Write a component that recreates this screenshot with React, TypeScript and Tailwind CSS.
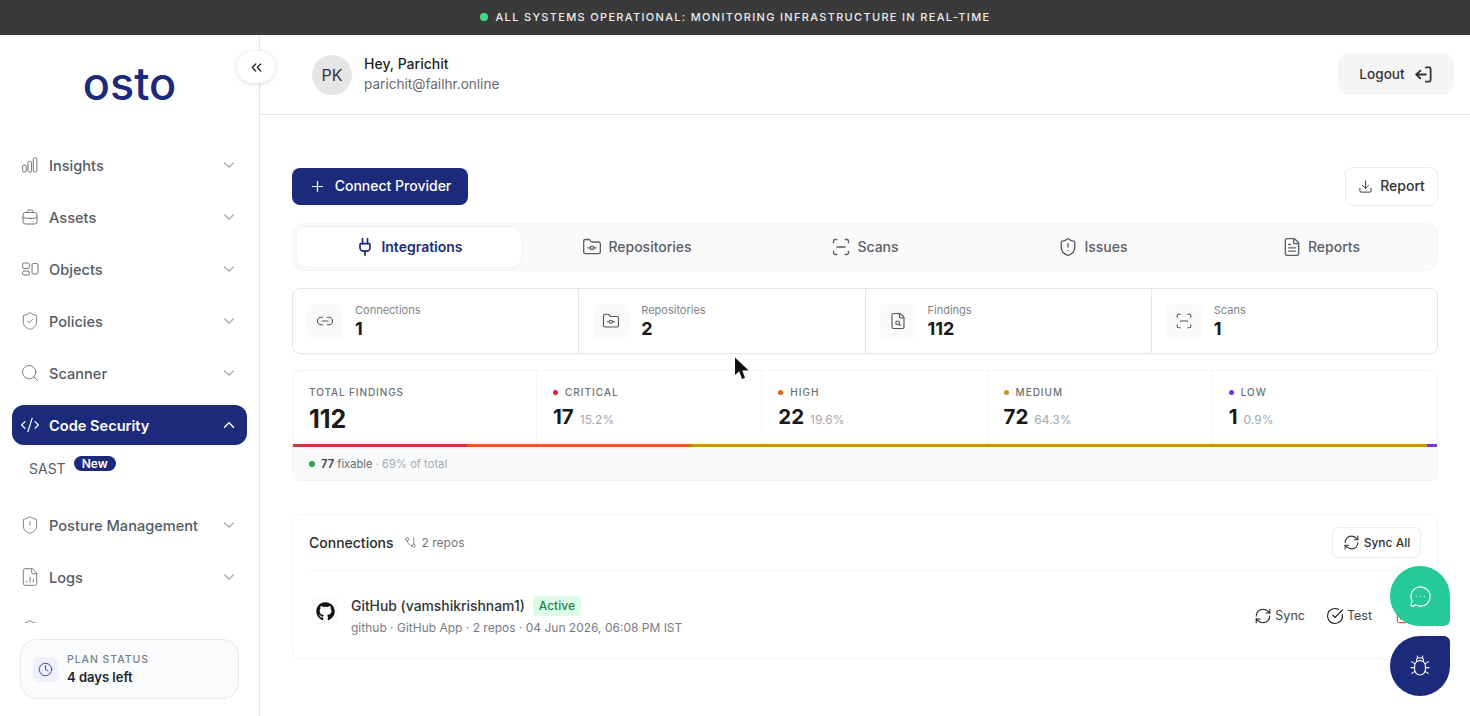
import React from "react";
import {
  ChevronDown, ChevronUp, ChevronsLeft, ShieldCheck, Search, CodeXml, ShieldAlert, FileChartColumn, Clock,
  LogOut, Plus, Download, Plug, FolderGit, ScanLine, FileText, Link2, FileSearch, GitBranch, RefreshCw,
  CircleCheckBig, Trash2, MessageCircleMore,
} from "lucide-react";
import { FaGithub } from "react-icons/fa";

function BarsIcon() {
  return (
    <svg width="16" height="16" viewBox="0 0 16 16" fill="none" stroke="currentColor" strokeWidth="1">
      <rect x="0.7" y="8" width="3.6" height="7" rx="1.2" />
      <rect x="6" y="4.5" width="3.6" height="10.5" rx="1.2" />
      <rect x="11.3" y="0.8" width="3.6" height="14.2" rx="1.2" />
    </svg>
  );
}
function CaseIcon() {
  return (
    <svg width="16" height="16" viewBox="0 0 16 16" fill="none" stroke="currentColor" strokeWidth="1">
      <rect x="1" y="3.5" width="14" height="11.5" rx="2.5" />
      <path d="M5.2 3.5V2.4c0-.8.6-1.4 1.4-1.4h2.8c.8 0 1.4.6 1.4 1.4v1.1M1 8.5c4 1.4 10 1.4 14 0M8 8.6v1" />
    </svg>
  );
}
function ObjectsIcon() {
  return (
    <svg width="17" height="16" viewBox="0 0 17 16" fill="none" stroke="currentColor" strokeWidth="1">
      <rect x="0.7" y="2" width="6.6" height="5.5" rx="1.2" />
      <rect x="0.7" y="10" width="6.6" height="4" rx="1.2" />
      <rect x="10" y="2.5" width="6" height="10.5" rx="1.5" />
    </svg>
  );
}
function BugIcon() {
  return (
    <svg width="20" height="22" viewBox="0 0 20 22" fill="none" stroke="currentColor" strokeWidth="1.1" strokeLinecap="round">
      <rect x="4.6" y="5.6" width="10.8" height="14.4" rx="5.4" />
      <path d="M6.6 6.2V4.6c0-1 .8-1.6 1.6-1.6h3.6c.8 0 1.6.6 1.6 1.6v1.6M7.2 1l1 2M12.8 1l-1 2M4.6 8.6 1.6 6.6M15.4 8.6l3-2M4.4 12.6H1M15.6 12.6H19M4.9 16.4l-3 2M15.1 16.4l3 2" />
    </svg>
  );
}

type NavProps = { icon: React.ReactNode; label: string; active?: boolean };
function NavItem({ icon, label, active }: NavProps) {
  return (
    <div className={`flex h-10 items-center rounded-xl pl-[10px] pr-[9px] ${active ? "bg-[#1c2a7c] text-white" : "text-[#545b66]"}`}>
      <span className={`flex w-[16px] items-center justify-center [&>svg]:shrink-0 ${active ? "text-white" : "text-[#70757e]"}`}>{icon}</span>
      <span className={`ml-[11px] flex-1 pt-[1px] text-[14.6px] leading-5 ${active ? "font-semibold" : "font-medium"}`}>{label}</span>
      {active ? <ChevronUp size={18} strokeWidth={2} /> : <ChevronDown size={18} strokeWidth={1.5} className="text-[#a4a9b0]" />}
    </div>
  );
}

function Tab({ icon, label, active }: { icon: React.ReactNode; label: string; active?: boolean }) {
  return (
    <div className={`flex h-10 flex-1 items-center justify-center gap-[6px] rounded-[10px] text-sm ${active ? "bg-white font-semibold text-[#1c2a7c] shadow-[0_0_4px_rgba(0,0,0,0.06)]" : "font-medium text-[#5a5f68]"}`}>
      {icon}
      {label}
    </div>
  );
}

function Stat({ icon, label, value, last }: { icon: React.ReactNode; label: string; value: string; last?: boolean }) {
  return (
    <div className={`flex flex-1 items-center gap-3 pl-[14px] ${last ? "" : "border-r border-[#e6e6e6]"}`}>
      <div className="flex h-[35px] w-9 items-center justify-center rounded-md bg-[#fafafa] text-[#555]">{icon}</div>
      <div>
        <div className="text-[11px] leading-[14px] text-[#80848b]">{label}</div>
        <div className="text-lg leading-[23px] font-bold text-[#1a1a1a]">{value}</div>
      </div>
    </div>
  );
}

function Severity({ dot, label, value, pct, last }: { dot: string; label: string; value: string; pct: string; last?: boolean }) {
  return (
    <div className={`flex-1 pl-4 pt-[15px] ${last ? "" : "border-r border-[#f5f5f5]"}`}>
      <div className="flex items-center gap-[7px] text-[10px] leading-[13px] font-medium tracking-[0.1em] text-[#6b7078]">
        <span className={`h-[5px] w-[5px] rounded-full ${dot}`} />
        {label}
      </div>
      <div className="mt-[5px] flex items-baseline gap-[6px]">
        <span className="text-[20.5px] leading-[26px] font-bold text-[#1a1a1a]">{value}</span>
        <span className="text-xs text-[#a6a9ae]">{pct}</span>
      </div>
    </div>
  );
}

export default function App() {
  return (
    <div className="relative flex h-[716px] w-full flex-col overflow-hidden bg-white [font-family:Inter,sans-serif]">
      <div className="flex h-[35px] shrink-0 items-center justify-center gap-2 bg-[#3a3a3a] pb-[1px] text-[11px] font-medium tracking-[0.12em] text-[#ececec]">
        <span className="h-2 w-2 rounded-full bg-[#3ddc84]" />
        ALL SYSTEMS OPERATIONAL: MONITORING INFRASTRUCTURE IN REAL-TIME
      </div>

      <div className="flex min-h-0 flex-1">
        <aside className="relative flex w-[260px] shrink-0 flex-col border-r border-[#e8e8e8]">
          <div className="flex h-[110px] shrink-0 items-start justify-center pt-[17px] text-[45px] leading-[64px] font-medium text-[#1c2a7c]">
            osto
          </div>
          <div className="absolute left-[237px] top-4 z-10 flex h-8 w-[38px] items-center justify-center rounded-full bg-white text-[#222] shadow-[0_1px_5px_rgba(0,0,0,0.14)]">
            <ChevronsLeft size={17} strokeWidth={1.75} />
          </div>
          <nav className="min-h-0 flex-1 overflow-hidden pl-3 pr-3">
            <div className="flex flex-col gap-3">
              <NavItem icon={<BarsIcon />} label="Insights" />
              <NavItem icon={<CaseIcon />} label="Assets" />
              <NavItem icon={<ObjectsIcon />} label="Objects" />
              <NavItem icon={<ShieldCheck size={20} strokeWidth={1.1} />} label="Policies" />
              <NavItem icon={<Search size={20} strokeWidth={1.1} />} label="Scanner" />
              <NavItem icon={<CodeXml size={20} strokeWidth={1.5} />} label="Code Security" active />
              <div className="flex h-9 items-start pl-[17px]">
                <span className="text-sm leading-[24px] text-[#5a5f68]">SAST</span>
                <span className="ml-2 -mt-[1px] rounded-full bg-[#1c2a7c] px-[8px] text-xs leading-[15px] font-semibold text-white">New</span>
              </div>
              <NavItem icon={<ShieldAlert size={20} strokeWidth={1.1} />} label="Posture Management" />
              <NavItem icon={<FileChartColumn size={20} strokeWidth={1.1} />} label="Logs" />
              <NavItem icon={<ShieldCheck size={20} strokeWidth={1.1} />} label="" />
            </div>
          </nav>
          <div className="shrink-0 px-5 pb-[17px] pt-4">
            <div className="flex h-[60px] items-center gap-[9px] rounded-2xl border border-[#e9e9ee] bg-[#fafbfd] pl-[12px]">
              <div className="flex h-[25px] w-[25px] items-center justify-center rounded-md bg-[#eff0fa] text-[#3f3fa6]">
                <Clock size={15} strokeWidth={1.5} />
              </div>
              <div>
                <div className="text-[10.5px] leading-[15px] font-medium tracking-[0.09em] text-[#7a7e86]">PLAN STATUS</div>
                <div className="mt-[2px] text-[13px] leading-[17px] font-semibold text-[#23262d]">4 days left</div>
              </div>
            </div>
          </div>
        </aside>

        <div className="flex min-w-0 flex-1 flex-col">
          <header className="flex h-20 shrink-0 items-center justify-between border-b border-[#e8e8e8] pl-[52px] pr-4">
            <div className="flex items-center gap-3">
              <div className="flex h-10 w-10 items-center justify-center rounded-full bg-[#e5e5e5] text-base font-normal text-[#333]">PK</div>
              <div className="mb-[1px]">
                <div className="text-sm leading-5 font-medium text-[#1f1f1f]">Hey, Parichit</div>
                <div className="text-[13.6px] leading-5 text-[#666a70]">parichit@failhr.online</div>
              </div>
            </div>
            <div className="-mt-[1px] flex h-[42px] w-[116px] items-center justify-center gap-[9px] rounded-xl bg-[#f5f5f5] text-[13.6px] font-medium text-[#333]">
              Logout
              <LogOut size={19} strokeWidth={2.25} className="-scale-x-100" />
            </div>
          </header>

          <main className="flex min-h-0 flex-1 flex-col px-8 pt-[52px]">
            <div className="flex items-center justify-between">
              <div className="flex h-[37px] w-[176px] items-center justify-center gap-[9px] rounded-lg bg-[#1c2a7c] pb-[1px] text-sm font-medium text-white">
                <Plus size={17} strokeWidth={1.75} />
                Connect Provider
              </div>
              <div className="flex h-[39px] w-[93px] items-center justify-center gap-[7px] rounded-lg border border-[#ebebeb] pb-[1px] text-sm font-medium text-[#333]">
                <Download size={15} strokeWidth={1.5} />
                Report
              </div>
            </div>

            <div className="mt-[17px] flex h-12 items-center gap-1 rounded-xl border border-[#f5f5f5] bg-[#fafafa] px-1">
              <Tab icon={<Plug size={20} strokeWidth={2} />} label="Integrations" active />
              <Tab icon={<FolderGit size={20} strokeWidth={1.6} />} label="Repositories" />
              <Tab icon={<ScanLine size={20} strokeWidth={1.6} />} label="Scans" />
              <Tab icon={<ShieldAlert size={20} strokeWidth={1.6} />} label="Issues" />
              <Tab icon={<FileText size={20} strokeWidth={1.6} />} label="Reports" />
            </div>

            <div className="mt-[17px] flex h-[66px] rounded-lg border border-[#e6e6e6] shadow-[0_1px_1px_rgba(0,0,0,0.03)]">
              <Stat icon={<Link2 size={18} strokeWidth={1.5} />} label="Connections" value="1" />
              <Stat icon={<FolderGit size={18} strokeWidth={1.5} />} label="Repositories" value="2" />
              <Stat icon={<FileSearch size={18} strokeWidth={1.5} />} label="Findings" value="112" />
              <Stat icon={<ScanLine size={18} strokeWidth={1.5} />} label="Scans" value="1" last />
            </div>

            <div className="mt-4 overflow-hidden rounded-lg border border-[#f3f3f3]">
              <div className="flex h-[73px]">
                <div className="w-[244px] border-r border-[#f5f5f5] pl-4 pt-[15px]">
                  <div className="text-[10px] leading-[13px] font-medium tracking-[0.09em] text-[#6b7078]">TOTAL FINDINGS</div>
                  <div className="mt-[5px] text-[25px] leading-[30px] font-bold text-[#1a1a1a]">112</div>
                </div>
                <Severity dot="bg-[#dc2640]" label="CRITICAL" value="17" pct="15.2%" />
                <Severity dot="bg-[#e8601c]" label="HIGH" value="22" pct="19.6%" />
                <Severity dot="bg-[#c8921f]" label="MEDIUM" value="72" pct="64.3%" />
                <Severity dot="bg-[#7636dc]" label="LOW" value="1" pct="0.9%" last />
              </div>
              <div className="flex h-[3px]">
                <div className="w-[15.2%] bg-[#d1343a]" />
                <div className="w-[19.6%] bg-[#e0601f]" />
                <div className="w-[64.3%] bg-[#c8921f]" />
                <div className="w-[0.9%] bg-[#7636dc]" />
              </div>
              <div className="flex h-[33px] items-center gap-[6px] bg-[#f9fafc] pl-4 pt-[1px] text-[11.2px]">
                <span className="h-[6px] w-[6px] rounded-full bg-[#2aa655]" />
                <span className="text-[#666a70]"><span className="font-semibold text-[#3a3d42]">77</span> fixable <span className="text-[#a6a9ae]">· 69% of total</span></span>
              </div>
            </div>

            <div className="mt-[33px] h-[145px] rounded-lg border border-[#f5f5f5]">
              <div className="mx-4 flex h-14 items-center border-b border-[#f5f5f5]">
                <span className="text-sm font-medium text-[#2a2a2a]">Connections</span>
                <GitBranch size={13} strokeWidth={1.5} className="ml-[10px] -scale-x-100 text-[#777]" />
                <span className="ml-[5px] text-xs text-[#777]">2 repos</span>
                <div className="ml-auto flex h-[31px] w-[89px] items-center justify-center gap-1 rounded-md border border-[#ececec] text-xs font-medium text-[#333]">
                  <RefreshCw size={17} strokeWidth={1.5} />
                  Sync All
                </div>
              </div>
              <div className="flex items-start pl-[19px] pr-[16px] pt-[25px]">
                <div className="mt-[2px] flex h-[26px] w-[26px] items-center justify-center bg-[#fbfbfb] text-[#111]">
                  <FaGithub size={19} />
                </div>
                <div className="ml-[13px]">
                  <div className="flex items-center gap-2">
                    <span className="text-[13.9px] leading-5 font-medium text-[#333]">GitHub (vamshikrishnam1)</span>
                    <span className="rounded bg-[#dcfce7] px-[6px] text-xs leading-5 font-medium text-[#23804a]">Active</span>
                  </div>
                  <div className="mt-1 text-xs leading-[16px] text-[#777b82]">github · GitHub App · 2 repos · 04 Jun 2026, 06:08 PM IST</div>
                </div>
                <div className="ml-auto mt-[11px] flex items-center pr-[11px] text-[12.5px] text-[#444]">
                  <RefreshCw size={18} strokeWidth={1.5} className="text-[#222]" />
                  <span className="ml-[3px]">Sync</span>
                  <CircleCheckBig size={18} strokeWidth={1.5} className="ml-[21px] text-[#222]" />
                  <span className="ml-[3px]">Test</span>
                  <Trash2 size={16} strokeWidth={1.5} className="ml-[22px] text-[#c0392b]" />
                </div>
              </div>
            </div>
          </main>
        </div>
      </div>

      <div className="absolute left-[1390px] top-[566px] flex h-[60px] w-[60px] items-center justify-center rounded-[30px] rounded-br-[6px] bg-[#26c998] text-white">
        <MessageCircleMore size={23} strokeWidth={1.25} />
      </div>
      <div className="absolute left-[1390px] top-[636px] flex h-[60px] w-[60px] items-center justify-center rounded-[30px] rounded-tr-[6px] bg-[#1c2a7c] text-white">
        <BugIcon />
      </div>
      <svg className="absolute left-[734px] top-[357px]" width="16" height="24" viewBox="0 0 16 24">
        <path d="M1 0.5 L1 18 L5.2 14.2 L8 22 L11 20.8 L8.2 13.4 L14.5 13.2 Z" fill="#111" />
      </svg>
    </div>
  );
}
